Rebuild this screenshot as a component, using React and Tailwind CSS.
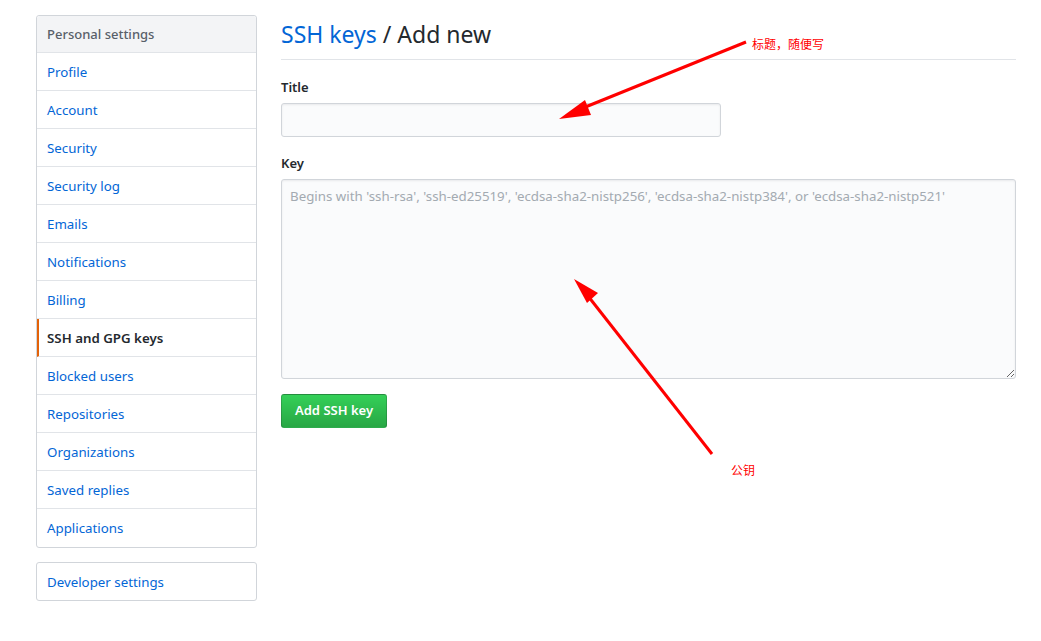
import React from 'react';

const navItems = [
  'Profile',
  'Account',
  'Security',
  'Security log',
  'Emails',
  'Notifications',
  'Billing',
  'SSH and GPG keys',
  'Blocked users',
  'Repositories',
  'Organizations',
  'Saved replies',
  'Applications',
];

const font = { fontFamily: '"Noto Sans", "Liberation Sans", sans-serif' };

const Sidebar = () => (
  <div className="w-[221px] shrink-0">
    <div className="rounded-[3px] border border-[#d1d5da] bg-white">
      <div className="h-[37px] flex items-center px-[10px] pt-[1px] bg-[#f3f4f6] border-b border-[#e1e4e8] text-[13px] font-medium text-[#586069] rounded-t-[3px]">
        Personal settings
      </div>
      {navItems.map((item, i) => {
        const active = item === 'SSH and GPG keys';
        return (
          <div
            key={item}
            className={
              'h-[38px] flex items-center px-[10px] pt-[2px] text-[13.3px] ' +
              (i < navItems.length - 1 ? 'border-b border-[#e1e4e8] ' : '') +
              (active
                ? 'font-semibold text-[#24292e] border-l-2 border-l-[#e36209] pl-[8px]'
                : 'text-[#0366d6]')
            }
          >
            {item}
          </div>
        );
      })}
    </div>
    <div className="mt-[14px] rounded-[3px] border border-[#d1d5da] h-[39px] flex items-center px-[10px] pt-[2px] text-[13.3px] text-[#0366d6]">
      Developer settings
    </div>
  </div>
);

const Annotations = () => (
  <>
    <svg className="absolute left-0 top-0 pointer-events-none" width="1041" height="641">
      <g stroke="#ff0000" strokeWidth="3" fill="#ff0000">
        <line x1="746" y1="42" x2="578" y2="110" />
        <polygon points="559,119 585,100 591,115" stroke="none" />
        <line x1="712" y1="454" x2="588" y2="296" />
        <polygon points="574,279 598,293 587,303" stroke="none" />
      </g>
    </svg>
    <div className="absolute left-[752px] top-[35px] text-[12px] text-[#ff0000]" style={{ fontFamily: '"Noto Sans CJK SC", sans-serif' }}>
      标题，随便写
    </div>
    <div className="absolute left-[731px] top-[461px] text-[12px] text-[#ff0000]" style={{ fontFamily: '"Noto Sans CJK SC", sans-serif' }}>
      公钥
    </div>
  </>
);

export default function App() {
  return (
    <div className="relative w-[1041px] h-[641px] bg-white" style={font}>
      <div className="flex pt-[15px] pl-[36px]">
        <Sidebar />
        <div className="ml-[24px] w-[735px]">
          <div className="h-[45px] border-b border-[#e1e4e8] flex items-center">
            <h1 className="text-[23px] font-normal text-[#24292e] leading-none -mt-[5px]">
              <span className="text-[#0366d6]">SSH keys</span> / Add new
            </h1>
          </div>
          <div className="mt-[17px]">
            <label className="block text-[13px] font-semibold text-[#24292e] leading-[20px]">Title</label>
            <div className="mt-[6px] w-[440px] h-[34px] rounded-[3px] border border-[#d1d5da] bg-[#fafbfc] shadow-[inset_0_1px_2px_rgba(27,31,35,0.075)]" />
          </div>
          <div className="mt-[16px]">
            <label className="block text-[13px] font-semibold text-[#24292e] leading-[20px]">Key</label>
            <textarea
              className="mt-[6px] block w-full h-[200px] rounded-[3px] border border-[#d1d5da] bg-[#fafbfc] px-[8px] py-[6px] text-[13.3px] leading-[20px] text-[#24292e] placeholder:text-[#a3aab1] outline-none shadow-[inset_0_1px_2px_rgba(27,31,35,0.075)]"
              style={font}
              placeholder="Begins with 'ssh-rsa', 'ssh-ed25519', 'ecdsa-sha2-nistp256', 'ecdsa-sha2-nistp384', or 'ecdsa-sha2-nistp521'"
            />
          </div>
          <button
            className="mt-[15px] h-[34px] px-[13px] rounded-[3px] border border-[rgba(27,31,35,0.2)] bg-gradient-to-b from-[#34d058] to-[#28a745] text-white text-[13px] font-semibold"
            style={font}
          >
            Add SSH key
          </button>
        </div>
      </div>
      <Annotations />
    </div>
  );
}
